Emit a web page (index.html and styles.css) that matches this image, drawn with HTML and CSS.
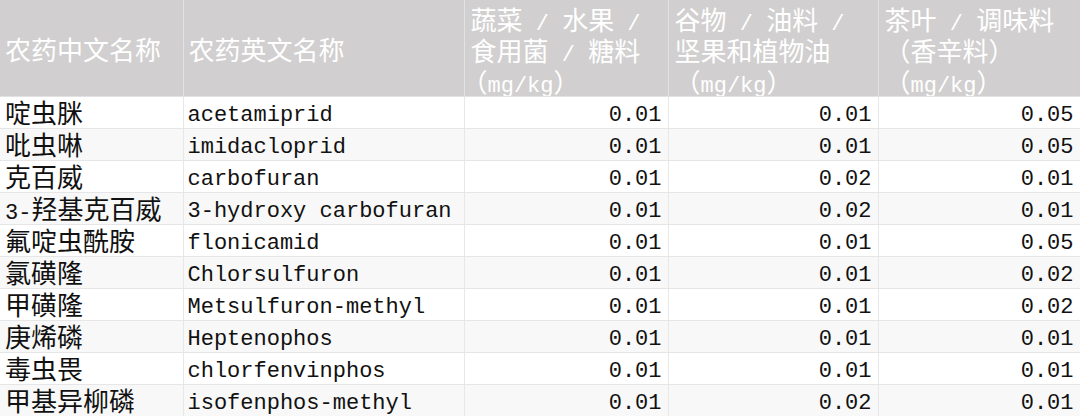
FILE: index.html
```html
<!DOCTYPE html>
<html lang="zh">
<head>
<meta charset="utf-8">
<title>农药残留限量</title>
<link rel="stylesheet" href="styles.css">
</head>
<body>
<table class="mrl">
  <colgroup>
    <col class="c1"><col class="c2"><col class="c3"><col class="c4"><col class="c5">
  </colgroup>
  <thead>
    <tr>
      <th class="mid">农药中文名称</th>
      <th class="mid">农药英文名称</th>
      <th class="top">蔬菜<span class="lt"> / </span>水果<span class="lt"> /</span><br>食用菌<span class="lt"> / </span>糖料<br><span class="lp">（</span><span class="lt">mg/kg</span>）</th>
      <th class="top">谷物<span class="lt"> / </span>油料<span class="lt"> /</span><br>坚果和植物油<br>（<span class="lt">mg/kg</span>）</th>
      <th class="top">茶叶<span class="lt"> / </span>调味料<br>（香辛料）<br>（<span class="lt">mg/kg</span>）</th>
    </tr>
  </thead>
  <tbody>
    <tr><td class="cn">啶虫脒</td><td class="en">acetamiprid</td><td class="num">0.01</td><td class="num">0.01</td><td class="num">0.05</td></tr>
    <tr><td class="cn">吡虫啉</td><td class="en">imidacloprid</td><td class="num">0.01</td><td class="num">0.01</td><td class="num">0.05</td></tr>
    <tr><td class="cn">克百威</td><td class="en">carbofuran</td><td class="num">0.01</td><td class="num">0.02</td><td class="num">0.01</td></tr>
    <tr><td class="cn"><span class="lt">3-</span>羟基克百威</td><td class="en">3-hydroxy carbofuran</td><td class="num">0.01</td><td class="num">0.02</td><td class="num">0.01</td></tr>
    <tr><td class="cn">氟啶虫酰胺</td><td class="en">flonicamid</td><td class="num">0.01</td><td class="num">0.01</td><td class="num">0.05</td></tr>
    <tr><td class="cn">氯磺隆</td><td class="en">Chlorsulfuron</td><td class="num">0.01</td><td class="num">0.01</td><td class="num">0.02</td></tr>
    <tr><td class="cn">甲磺隆</td><td class="en">Metsulfuron-methyl</td><td class="num">0.01</td><td class="num">0.01</td><td class="num">0.02</td></tr>
    <tr><td class="cn">庚烯磷</td><td class="en">Heptenophos</td><td class="num">0.01</td><td class="num">0.01</td><td class="num">0.01</td></tr>
    <tr><td class="cn">毒虫畏</td><td class="en">chlorfenvinphos</td><td class="num">0.01</td><td class="num">0.01</td><td class="num">0.01</td></tr>
    <tr><td class="cn">甲基异柳磷</td><td class="en">isofenphos-methyl</td><td class="num">0.01</td><td class="num">0.02</td><td class="num">0.01</td></tr>
  </tbody>
</table>
</body>
</html>
```
FILE: styles.css
```css
html, body {
  margin: 0;
  padding: 0;
  background: #ffffff;
}

.mrl {
  width: 1080px;
  border-collapse: collapse;
  table-layout: fixed;
  font-family: "Noto Sans CJK SC", sans-serif;
  font-size: 26px;
  color: #111111;
}

.c1 { width: 183px; }
.c2 { width: 281px; }
.c3 { width: 204px; }
.c4 { width: 210px; }
.c5 { width: 202px; }

.lt {
  font-family: "Liberation Mono", "DejaVu Sans Mono", monospace;
  font-size: 22px;
  line-height: 0;
  white-space: pre;
}

.lp {
  margin-left: -9px;
}

.mrl th {
  background: #d1cfcf;
  color: #ffffff;
  font-weight: normal;
  text-align: left;
  height: 96px;
  padding: 0 5px;
  border-right: 1px solid #e2e2e2;
  border-bottom: 1px solid #e2e2e2;
  line-height: 31px;
  white-space: nowrap;
  overflow: hidden;
  box-sizing: border-box;
}

.mrl th.mid {
  vertical-align: middle;
}

.mrl th.top {
  vertical-align: top;
  padding-top: 3px;
  padding-left: 6px;
}

.mrl td {
  height: 31px;
  line-height: 31px;
  padding: 0 5px;
  border-right: 1px solid #e8e8e8;
  border-bottom: 1px solid #e6e6e6;
  white-space: nowrap;
  overflow: hidden;
}

.mrl tbody tr:nth-child(even) td {
  background: #f8f8f8;
}

.mrl td.cn {
  height: 29px;
  line-height: 29px;
  padding-bottom: 2px;
}

.mrl td.en,
.mrl td.num {
  font-family: "Liberation Mono", "DejaVu Sans Mono", monospace;
  font-size: 22px;
  height: 25px;
  line-height: 25px;
  padding-top: 6px;
}

.mrl td.en {
  padding-left: 4px;
}

.mrl td.num {
  text-align: right;
  padding-right: 6px;
}
```
